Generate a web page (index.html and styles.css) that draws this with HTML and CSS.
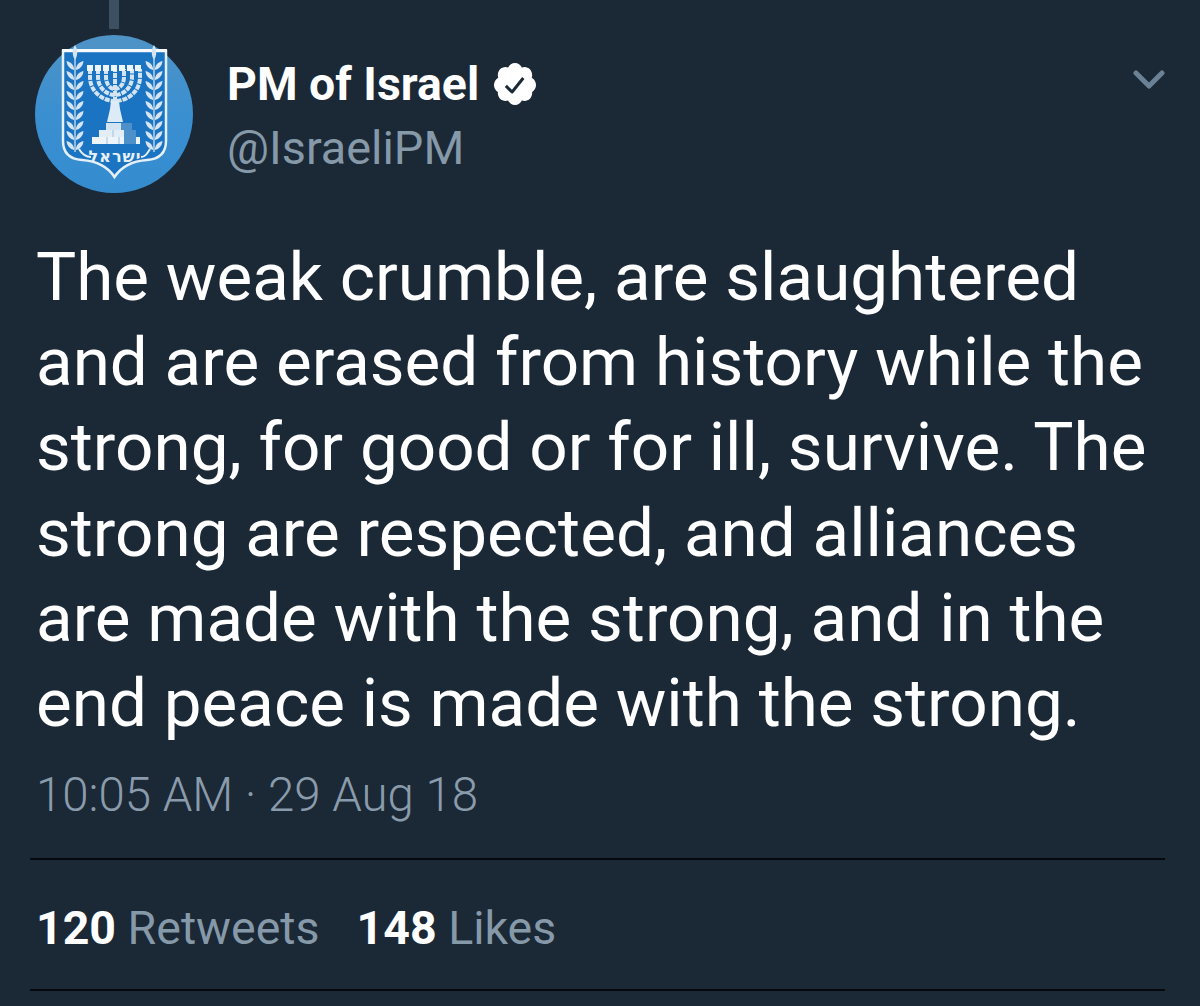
FILE: index.html
```html
<!DOCTYPE html>
<html lang="en">
<head>
<meta charset="utf-8">
<title>PM of Israel</title>
<link rel="stylesheet" href="styles.css">
</head>
<body>
<main class="tweet">
  <div class="thread-line"></div>
  <header class="head">
    <svg class="avatar" viewBox="0 0 158 158" aria-label="Emblem">
      <defs>
        <linearGradient id="av" x1="0" y1="0" x2="0" y2="1">
          <stop offset="0" stop-color="#4f93c6"/>
          <stop offset="0.5" stop-color="#3a8fd0"/>
          <stop offset="1" stop-color="#348ccf"/>
        </linearGradient>
        <g id="pair" fill="#d5e5f3">
          <path d="M-.8 6C-5 5-8 2-8.500-3C-4-2-1 1-.8 6z"/>
          <path d="M.8 6C5 5 8 2 8.500-3C4-2 1 1 .8 6z"/>
        </g>
        <g id="wreath">
          <path d="M0 20C-3 15-3 10 0 5C3 10 3 15 0 20z" fill="#d5e5f3"/>
          <path d="M0 18V112" stroke="#b9d3ea" stroke-width="1.5"/>
          <use href="#pair" y="24"/>
          <use href="#pair" y="34"/>
          <use href="#pair" y="44"/>
          <use href="#pair" y="54"/>
          <use href="#pair" y="64"/>
          <use href="#pair" y="74"/>
          <use href="#pair" y="84"/>
          <use href="#pair" y="94"/>
          <use href="#pair" y="104"/>
        </g>
      </defs>
      <circle cx="79" cy="79" r="79" fill="url(#av)"/>
      <path d="M28 16H131V106C131 118 125 124 112 125C98 126 86 132 79.500 142C73 132 61 126 47 125C34 124 28 118 28 106z" fill="#1a74c2" stroke="#e6f0f8" stroke-width="2.500"/>
      <path d="M27 15.500H132" stroke="#f6fafd" stroke-width="3"/>
      <use href="#wreath" x="40" y="5"/>
      <use href="#wreath" x="119" y="5"/>
      <g fill="none" stroke="#d4e4f2" stroke-width="4" stroke-dasharray="5 1">
        <path d="M55 34V42C55 57 68 66 80 66S105 57 105 42V34"/>
        <path d="M63 34V42C63 53 72 60 80 60S97 53 97 42V34"/>
        <path d="M71 34V42C71 49 75 54 80 54S89 49 89 42V34"/>
        <path d="M80 32V70"/>
      </g>
      <path d="M52 33H108" stroke="#eef5fb" stroke-width="6" stroke-dasharray="6 2"/>
      <path d="M76 66H84L85 74L88 87H72L75 74z" fill="#dcebf6"/>
      <path d="M71 88H97V95H71z" fill="#d3e3f1"/>
      <path d="M64 95H101V102H64z" fill="#e2edf6"/>
      <path d="M57 102H105V109H57z" fill="#edf4fa"/>
      <path d="M86 88H97V95H86zM89 95H101V109H89z" fill="#4e90ca"/>
      <path d="M78 95V102M72 102V109M84 102V109" stroke="#9fc3e2" stroke-width="1"/>
      <path d="M44 114C47 119 50 122 56 122" fill="none" stroke="#e6f0f8" stroke-width="2"/>
      <path d="M115 114C112 119 110 122 106 122" fill="none" stroke="#e6f0f8" stroke-width="2"/>
      <text class="emblem-text" x="80" y="127" text-anchor="middle" direction="rtl">ישראל</text>
    </svg>
    <div class="identity">
      <div class="name-row">
        <span class="name">PM of Israel</span>
        <svg class="badge" viewBox="0 0 24 24" aria-hidden="true">
          <path fill="#fff" d="M22.500 12.500c0-1.580-.875-2.950-2.148-3.600.154-.435.238-.905.238-1.400 0-2.210-1.710-3.998-3.818-3.998-.470 0-.920.084-1.336.250C14.818 2.415 13.510 1.500 12 1.500s-2.816.917-3.437 2.250c-.415-.165-.866-.250-1.336-.250-2.110 0-3.818 1.790-3.818 4 0 .494.083.964.237 1.400-1.272.650-2.147 2.018-2.147 3.600 0 1.495.782 2.798 1.942 3.486-.020.170-.032.340-.032.514 0 2.210 1.708 4 3.818 4 .470 0 .920-.086 1.335-.250.620 1.334 1.926 2.250 3.437 2.250 1.512 0 2.818-.916 3.437-2.250.415.163.865.248 1.336.248 2.110 0 3.818-1.790 3.818-4 0-.174-.012-.344-.033-.513 1.158-.687 1.943-1.990 1.943-3.484z"/>
          <path fill="#1b2836" d="M10.520 16.780c-.200 0-.390-.080-.530-.220l-3.070-3.070 1.060-1.060 2.490 2.490 5.100-6.400 1.170.940-5.630 7.040c-.130.170-.330.270-.550.280h-.040z"/>
        </svg>
      </div>
      <div class="handle">@IsraeliPM</div>
    </div>
    <svg class="chevron" viewBox="0 0 32 20" aria-hidden="true">
      <path d="M3 3L16 16L29 3" fill="none" stroke="#6b8196" stroke-width="5" stroke-linecap="round" stroke-linejoin="round"/>
    </svg>
  </header>
  <p class="text">The weak crumble, are slaughtered<br>and are erased from history while the<br>strong, for good or for ill, survive. The<br>strong are respected, and alliances<br>are made with the strong, and in the<br>end peace is made with the strong.</p>
  <div class="time">10:05 AM · 29 Aug 18</div>
  <div class="stats">
    <span class="stat"><b>120</b> Retweets</span>
    <span class="stat"><b>148</b> Likes</span>
  </div>
</main>
</body>
</html>
```
FILE: styles.css
```css
html, body {
  margin: 0;
  height: 100%;
  background: #1b2836;
}
body {
  overflow: hidden;
  font-family: Roboto, "Liberation Sans", sans-serif;
}
.tweet {
  position: relative;
  height: 1006px;
  box-sizing: border-box;
  padding: 35px 35px 0 36px;
}
.thread-line {
  position: absolute;
  left: 109px;
  top: 0;
  width: 10px;
  height: 29px;
  background: #3c4f63;
}
.head {
  display: flex;
  align-items: flex-start;
  height: 158px;
  margin-left: -1px;
}
.avatar {
  width: 158px;
  height: 158px;
  flex: none;
}
.emblem-text {
  font-family: "DejaVu Sans", sans-serif;
  font-size: 16px;
  font-weight: 700;
  letter-spacing: 1px;
  fill: #e6f0f8;
}
.identity {
  margin-left: 34px;
  flex: 1;
  padding-top: 23px;
}
.name-row {
  display: flex;
  align-items: center;
  gap: 12px;
  height: 52px;
}
.name {
  font-size: 46.4px;
  font-weight: 700;
  color: #fff;
  line-height: 52px;
}
.badge {
  width: 48px;
  height: 48px;
}
.handle {
  font-size: 46.8px;
  line-height: 52px;
  margin-top: 12px;
  color: #8699a9;
}
.chevron {
  width: 32px;
  height: 20px;
  margin-top: 35px;
}
.text {
  margin: 41px 0 0;
  font-size: 67.4px;
  line-height: 85.2px;
  color: #fff;
  white-space: nowrap;
}
.time {
  margin-top: 23px;
  font-size: 47.4px;
  font-weight: 300;
  line-height: 54px;
  color: #8a9bab;
}
.stats {
  margin-top: 36px;
  margin-left: -6px;
  padding: 42px 0 35px 6px;
  border-top: 2px solid #05090d;
  border-bottom: 2px solid #05090d;
  display: flex;
  gap: 37px;
  font-size: 46.5px;
  line-height: 52px;
  color: #8699a9;
}
.stat b {
  font-weight: 700;
  color: #fff;
}
```
